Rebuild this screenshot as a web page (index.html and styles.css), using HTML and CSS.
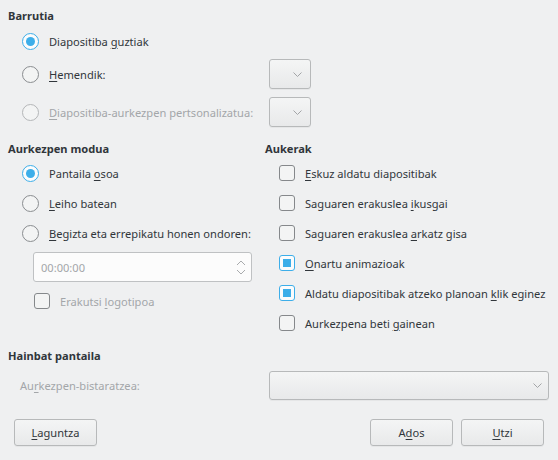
FILE: index.html
```html
<!DOCTYPE html>
<html>
<head>
<meta charset="utf-8">
<link rel="stylesheet" href="styles.css">
</head>
<body>
<div class="dialog">
  <section class="range">
    <div class="title">Barrutia</div>
    <div class="range-grid">
      <div class="opt r1"><span class="radio on"></span><span>Diapositiba <u>g</u>uztiak</span></div>
      <div></div>
      <div class="opt r2"><span class="radio"></span><span><u>H</u>emendik:</span></div>
      <div class="combo small r2"><svg class="chev" width="9" height="5" viewBox="0 0 9 5"><path d="M0.5 0.5 L4.5 4.5 L8.5 0.5" fill="none" stroke="#a3a5a7" stroke-width="1"/></svg></div>
      <div class="opt r3 disabled"><span class="radio"></span><span><u>D</u>iapositiba-aurkezpen pertsonalizatua:</span></div>
      <div class="combo small r3"><svg class="chev" width="9" height="5" viewBox="0 0 9 5"><path d="M0.5 0.5 L4.5 4.5 L8.5 0.5" fill="none" stroke="#a3a5a7" stroke-width="1"/></svg></div>
    </div>
  </section>

  <section class="middle">
    <div class="col-left">
      <div class="title">Aurkezpen modua</div>
      <div class="opt row"><span class="radio on"></span><span>Pantaila <u>o</u>soa</span></div>
      <div class="opt row"><span class="radio"></span><span><u>L</u>eiho batean</span></div>
      <div class="opt row"><span class="radio"></span><span><u>B</u>egizta eta errepikatu honen ondoren:</span></div>
      <div class="spin">
        <span class="spin-text">00:00:00</span>
        <svg class="spin-arrows" width="10" height="16" viewBox="0 0 10 16"><path d="M1 5 L5 1 L9 5" fill="none" stroke="#a9abad" stroke-width="1"/><path d="M1 10 L5 14 L9 10" fill="none" stroke="#a9abad" stroke-width="1"/></svg>
      </div>
      <div class="opt logo disabled"><span class="check"></span><span>Erakutsi <u>l</u>ogotipoa</span></div>
    </div>
    <div class="col-right">
      <div class="title">Aukerak</div>
      <div class="opt crow"><span class="check"></span><span><u>E</u>skuz aldatu diapositibak</span></div>
      <div class="opt crow"><span class="check"></span><span>Saguaren erakuslea <u>i</u>kusgai</span></div>
      <div class="opt crow"><span class="check"></span><span>Saguaren erakuslea <u>a</u>rkatz gisa</span></div>
      <div class="opt crow"><span class="check on"></span><span><u>O</u>nartu animazioak</span></div>
      <div class="opt crow"><span class="check on"></span><span>Aldatu diapositibak atzeko planoan <u>k</u>lik eginez</span></div>
      <div class="opt crow"><span class="check"></span><span>Aurkezpena beti <u>g</u>ainean</span></div>
    </div>
  </section>

  <section class="multi">
    <div class="title">Hainbat pantaila</div>
    <div class="multi-row">
      <span class="disabled label">Au<u>r</u>kezpen-bistaratzea:</span>
      <div class="combo wide"><svg class="chev" width="9" height="5" viewBox="0 0 9 5"><path d="M0.5 0.5 L4.5 4.5 L8.5 0.5" fill="none" stroke="#a3a5a7" stroke-width="1"/></svg></div>
    </div>
  </section>

  <div class="buttons">
    <button class="btn"><u>L</u>aguntza</button>
    <div class="spacer"></div>
    <button class="btn">A<u>d</u>os</button>
    <button class="btn"><u>U</u>tzi</button>
  </div>
</div>
</body>
</html>
```

FILE: styles.css
```css
html, body {
  margin: 0;
  padding: 0;
  background: #eff0f1;
}
body {
  font-family: "Noto Sans", "DejaVu Sans", sans-serif;
  font-size: 11.1px;
  color: #31363b;
  width: 558px;
  height: 460px;
  overflow: hidden;
}
u {
  text-decoration: underline;
  text-underline-offset: 2px;
  text-decoration-thickness: 1px;
}
.dialog {
  display: flex;
  flex-direction: column;
}
.title {
  font-weight: bold;
  height: 18px;
  line-height: 18px;
}
.disabled {
  color: #a3a6a9;
}
.opt {
  display: flex;
  align-items: center;
  gap: 10px;
}

/* radio & checkbox */
.radio {
  box-sizing: border-box;
  width: 17px;
  height: 17px;
  border-radius: 50%;
  border: 1px solid #8a8d90;
  background: #f3f4f4;
  flex: none;
  position: relative;
}
.disabled .radio {
  border-color: #b4b6b8;
}
.radio.on {
  border-color: #3daee9;
  background: #fcfcfc;
}
.radio.on::after {
  content: "";
  position: absolute;
  left: 3px;
  top: 3px;
  width: 9px;
  height: 9px;
  border-radius: 50%;
  background: #3daee9;
}
.check {
  box-sizing: border-box;
  width: 16px;
  height: 16px;
  border-radius: 3px;
  border: 1px solid #85888b;
  background: #f3f4f4;
  flex: none;
  position: relative;
}
.check.on {
  border-color: #3daee9;
  background: #fcfcfc;
}
.check.on::after {
  content: "";
  position: absolute;
  left: 3px;
  top: 3px;
  width: 8px;
  height: 8px;
  background: #3daee9;
}

/* combos */
.combo {
  box-sizing: border-box;
  border: 1px solid #b7b9ba;
  border-radius: 3px;
  background: linear-gradient(#f4f5f5, #e8e9ea);
  display: flex;
  align-items: center;
  justify-content: flex-end;
  box-shadow: 0 1px 0 rgba(0,0,0,0.04);
}
.combo.small {
  width: 42px;
  height: 30px;
  padding-right: 8px;
}
.combo.wide {
  width: 280px;
  height: 29px;
  padding-right: 6px;
}

/* top section */
.range {
  padding: 7px 0 0 8px;
}
.range-grid {
  display: grid;
  grid-template-columns: 247px 42px;
  grid-template-rows: 31px 33px 38px;
  margin-left: 14px;
  align-items: end;
}
.range-grid .opt {
  height: 30px;
}

/* middle */
.middle {
  display: flex;
  padding-left: 8px;
  margin-top: 13px;
}
.col-left {
  width: 257px;
  display: flex;
  flex-direction: column;
}
.col-right {
  display: flex;
  flex-direction: column;
}
.row, .crow {
  height: 30px;
  padding-left: 14px;
}
.spin {
  box-sizing: border-box;
  margin-left: 25px;
  margin-top: 4px;
  width: 219px;
  height: 30px;
  border: 1px solid #bfc1c3;
  border-radius: 3px;
  background: #fcfcfc;
  display: flex;
  align-items: center;
  justify-content: space-between;
  padding: 0 5px 0 7px;
  color: #a3a6a9;
}
.spin-arrows {
  margin-top: 1px;
}
.logo {
  height: 30px;
  margin-top: 4px;
  padding-left: 26px;
}

/* multi */
.multi {
  padding-left: 8px;
  margin-top: 9px;
}
.multi-row {
  display: flex;
  align-items: center;
  margin-top: 6px;
}
.multi-row .label {
  padding-left: 12px;
  width: 249px;
}

/* buttons */
.buttons {
  display: flex;
  padding: 0 14px;
  margin-top: 19px;
  gap: 8px;
}
.spacer {
  flex: 1;
}
.btn {
  box-sizing: border-box;
  width: 83px;
  height: 27px;
  border: 1px solid #b7b9ba;
  border-radius: 3px;
  background: linear-gradient(#f4f5f5, #e8e9ea);
  font-family: inherit;
  font-size: 11.1px;
  color: #31363b;
  padding: 0;
  box-shadow: 0 1px 0 rgba(0,0,0,0.04);
}
```
